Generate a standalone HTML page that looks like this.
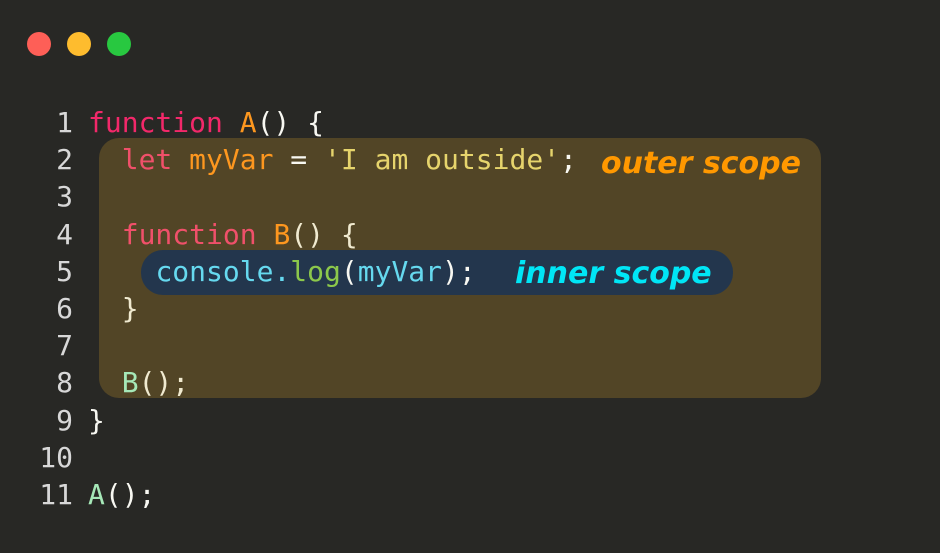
<!DOCTYPE html>
<html><head><meta charset="utf-8"><style>
body{margin:0;width:940px;height:553px;background:#282825;overflow:hidden;position:relative;font-family:"DejaVu Sans Mono",monospace;}
.dot{position:absolute;top:32px;width:24px;height:24px;border-radius:50%;}
.box{position:absolute;left:99px;top:138px;width:722px;height:260px;background:#524526;border-radius:20px;}
.inner{position:absolute;left:141px;top:250px;width:592px;height:45px;background:#23364d;border-radius:22px;}
.code{position:absolute;left:0;top:104px;font-size:28px;line-height:37.2px;white-space:pre;color:#f8f8f2;}
.ln{display:inline-block;width:73px;text-align:right;color:#d8d8d8;margin-right:15px;}
.k{color:#f2286a}.k2{color:#f0506a}.o{color:#fd971f}.s{color:#e6d46c}.c{color:#66d9ef}.g{color:#8cc84b}.b{color:#a6e8b8}.w{color:#f0ead0}
.lab{position:absolute;font-family:"DejaVu Sans",sans-serif;font-style:italic;font-weight:600;font-size:30px;}
</style></head><body>
<div class="dot" style="left:27px;background:#fe5f57"></div>
<div class="dot" style="left:67px;background:#febc2e"></div>
<div class="dot" style="left:107px;background:#28c840"></div>
<div class="box"></div>
<div class="inner"></div>
<div class="code"><span class="ln">1</span><span class="k">function</span> <span class="o">A</span>() {
<span class="ln">2</span>  <span class="k2">let</span> <span class="o">myVar</span> = <span class="s">'I am outside'</span>;
<span class="ln">3</span>
<span class="ln">4</span>  <span class="k2">function</span> <span class="o">B</span><span class="w">() {</span>
<span class="ln">5</span>    <span class="c">console.</span><span class="g">log</span>(<span class="c">myVar</span>);
<span class="ln">6</span>  <span class="w">}</span>
<span class="ln">7</span>
<span class="ln">8</span>  <span class="b">B</span><span class="w">();</span>
<span class="ln">9</span>}
<span class="ln">10</span>
<span class="ln">11</span><span class="b">A</span>();</div>
<div class="lab" style="left:601px;top:146px;color:#ff9800">outer scope</div>
<div class="lab" style="left:515px;top:256px;color:#00e6f6">inner scope</div>
</body></html>
